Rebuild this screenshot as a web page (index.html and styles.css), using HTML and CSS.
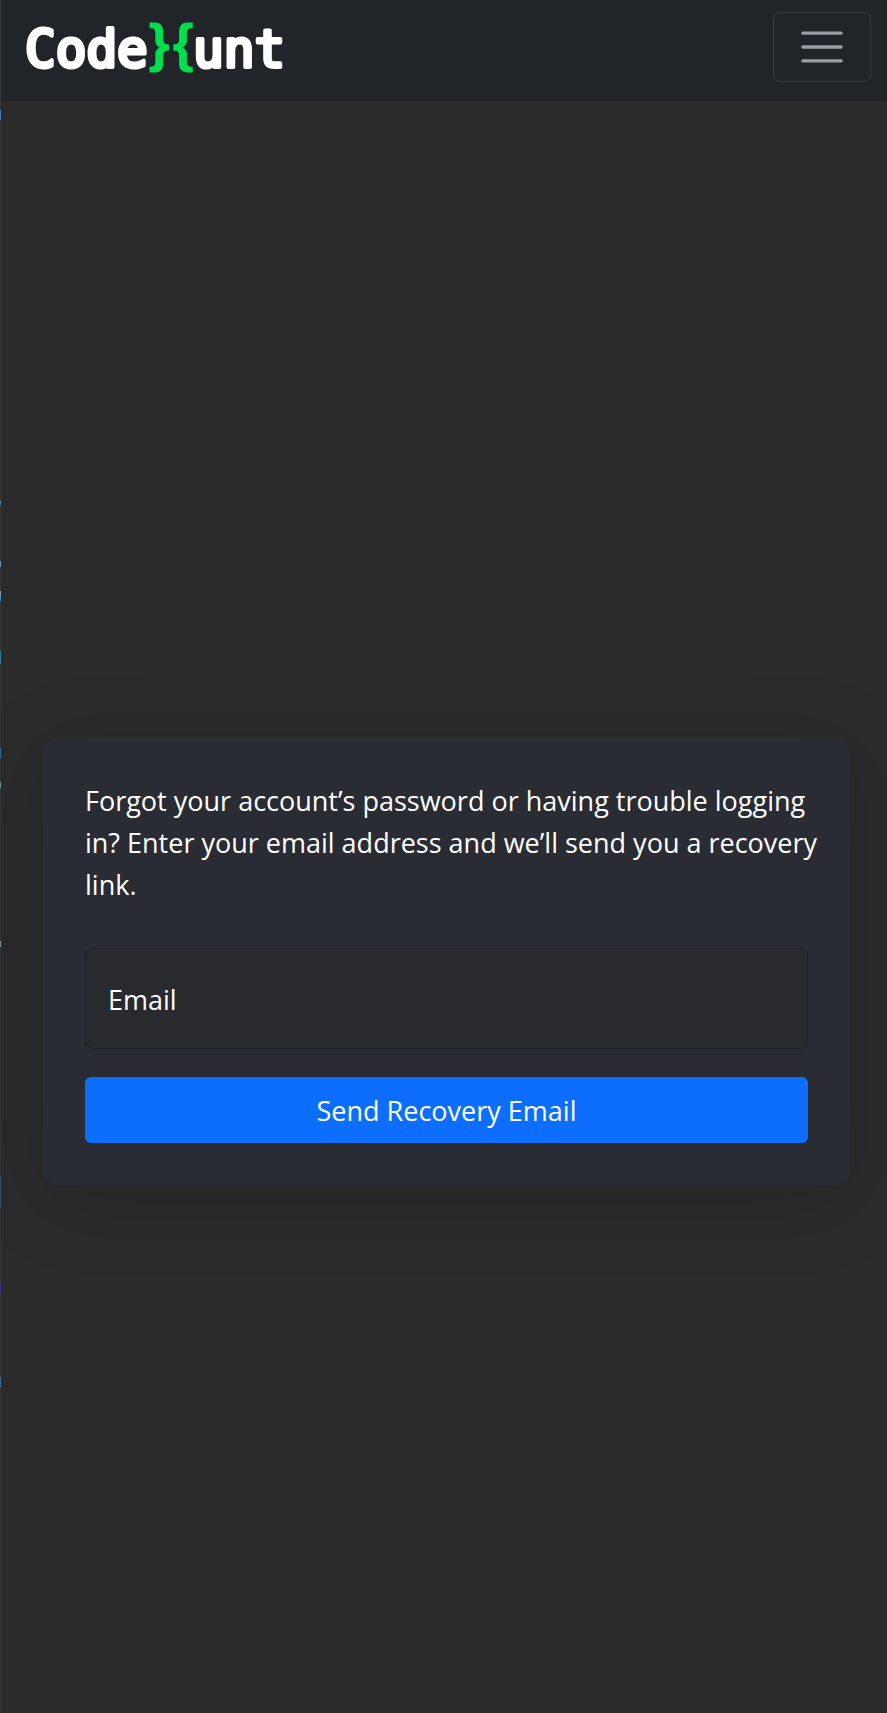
FILE: index.html
```html
<!DOCTYPE html>
<html lang="en">
<head>
<meta charset="utf-8">
<meta name="viewport" content="width=device-width, initial-scale=1">
<title>CodeHunt – Account recovery</title>
<link rel="stylesheet" href="styles.css">
</head>
<body class="page">
  <header class="navbar">
    <a class="brand" href="#" aria-label="CodeHunt">
      <svg class="brand-logo" viewBox="0 0 264 62" aria-hidden="true">
        <text class="logo-word" x="0" y="55">Code</text>
        <text class="logo-brace" x="124" y="49">}</text>
        <text class="logo-brace" x="148" y="49">{</text>
        <text class="logo-word" x="168" y="55">unt</text>
      </svg>
    </a>
    <button class="toggler" type="button" aria-label="Toggle navigation">
      <svg class="toggler-icon" viewBox="0 0 30 30" aria-hidden="true">
        <path d="M4 7h22M4 15h22M4 23h22"/>
      </svg>
    </button>
  </header>
  <main class="content">
    <form class="card">
      <p class="card-text">Forgot your account’s password or having trouble logging in? Enter your email address and we’ll send you a recovery link.</p>
      <input class="field" type="email" placeholder="Email" aria-label="Email">
      <button class="submit" type="submit">Send Recovery Email</button>
    </form>
  </main>
</body>
</html>
```

FILE: styles.css
```css
*, *::before, *::after {
  box-sizing: border-box;
}

.page {
  display: flex;
  flex-direction: column;
  min-height: 100vh;
  margin: 0;
  padding-left: 1px;
  background:
    linear-gradient(
      #35373d 110px, #3c7fc0 110px 120px, #35373d 120px 501px,
      #4a86b8 501px 505px, #35373d 505px 561px,
      #5b93b5 561px 567px, #35373d 567px 591px,
      #8f9aa0 591px 596px, #3c8fc0 596px 601px, #35373d 601px 651px,
      #2f7fa0 651px 664px, #35373d 664px 748px,
      #356a9a 748px 758px, #35373d 758px 782px,
      #6f8f90 782px 788px, #35373d 788px 941px,
      #7f9498 941px 947px, #35373d 947px 1176px,
      #3a4f70 1176px 1208px, #35373d 1208px 1283px,
      #34348c 1283px 1293px, #35373d 1293px 1377px,
      #35709c 1377px 1387px, #35373d 1387px
    ) left top / 1px 100% no-repeat,
    #2b2b2b;
  color: #fff;
  font-family: "Segoe UI", "Open Sans", "Noto Sans", sans-serif;
  font-size: 27px;
  line-height: 42px;
}

.navbar {
  display: flex;
  align-items: flex-start;
  justify-content: space-between;
  padding: 12px 16px 19px 24px;
  background: #212529;
}

.brand {
  display: block;
}

.brand-logo {
  display: block;
  width: 264px;
  height: 62px;
  overflow: visible;
}

.logo-word {
  fill: #fff;
  stroke: #fff;
  stroke-width: 4;
  stroke-linejoin: round;
  font: 51px "DejaVu Sans Mono", monospace;
}

.logo-brace {
  fill: #00e04f;
  stroke: #00e04f;
  stroke-width: 1;
  font: bold 52px "Liberation Sans", sans-serif;
}

.toggler {
  display: flex;
  align-items: center;
  justify-content: center;
  width: 98px;
  height: 70px;
  padding: 0;
  border: 1px solid #373b3e;
  border-radius: 7px;
  background: transparent;
}

.toggler-icon {
  width: 52px;
  height: 52px;
  fill: none;
  stroke: #9b9d9f;
  stroke-width: 2;
  stroke-linecap: round;
}

.content {
  display: flex;
  flex: 1;
  align-items: center;
  padding: 109px 37px 0 42px;
}

.card {
  display: flex;
  flex: 1;
  flex-direction: column;
  padding: 42px;
  border-radius: 14px;
  background: #292c33;
  box-shadow: 0 14px 84px rgba(0, 0, 0, 0.15);
}

.card-text {
  margin: 0 -16px 42px 0;
}

.field {
  width: 100%;
  height: 101px;
  margin: 0 0 28px;
  padding: 2px 22px 0;
  border: 1px solid #1e1f20;
  border-radius: 7px;
  background: #292a2d;
  color: #fff;
  font: inherit;
}

.field::placeholder {
  color: #fff;
  opacity: 1;
}

.submit {
  height: 66px;
  padding: 2px 20px 0;
  border: 0;
  border-radius: 6px;
  background: #0d6efd;
  color: #fff;
  font: inherit;
}
```
